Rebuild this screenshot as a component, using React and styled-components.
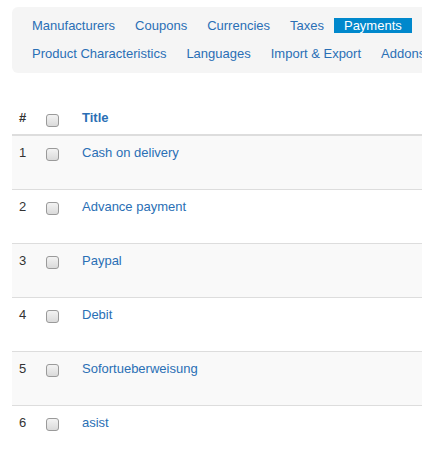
import React from "react";
import styled, { createGlobalStyle } from "styled-components";

const Global = createGlobalStyle`
  html, body { margin: 0; padding: 0; background: #fff; overflow: hidden; }
  body { font-family: "Liberation Sans", Arial, sans-serif; font-size: 13px; color: #333; }
`;

const Page = styled.div`
  width: 600px;
  padding: 7px 0 0 12px;
`;

const Nav = styled.ul`
  list-style: none;
  margin: 0;
  padding: 11px 10px 12px 10px;
  background: #f5f5f5;
  border-radius: 6px;
  display: flex;
  flex-wrap: wrap;
  row-gap: 13px;
  width: 440px;
  box-sizing: border-box;
`;

const NavItem = styled.li`
  a {
    display: block;
    padding: 0 10px;
    height: 15px;
    line-height: 15px;
    font-size: 13px;
    text-decoration: none;
    white-space: nowrap;
    color: ${(p) => (p.$active ? "#fff" : "#2a6fb5")};
    background: ${(p) => (p.$active ? "#0088cc" : "transparent")};
  }
`;

const Table = styled.table`
  margin-top: 26px;
  border-collapse: collapse;
  table-layout: fixed;
  width: 420px;
`;

const Th = styled.th`
  box-sizing: border-box;
  text-align: left;
  font-weight: bold;
  font-size: 13px;
  padding: 9px 7px 6px;
  height: 36px;
  line-height: 20px;
  vertical-align: middle;
  color: ${(p) => (p.$link ? "#2a6fb5" : "#333")};
  border-bottom: 2px solid #ddd;
  width: ${(p) => p.$w || "auto"};
`;

const Row = styled.tr`
  background: ${(p) => (p.$striped ? "#f9f9f9" : "#fff")};
  border-top: 1px solid #ddd;
  &:first-child { border-top: none; }
`;

const Td = styled.td`
  vertical-align: top;
  padding: 8px 7px 8px;
  height: 37px;
  line-height: 17px;
  font-size: 13px;
  color: ${(p) => (p.$link ? "#2a6fb5" : "#333")};
`;

const Check = styled.input.attrs({ type: "checkbox" })`
  appearance: none;
  -webkit-appearance: none;
  width: 13px;
  height: 13px;
  margin: 4px 0 0 0;
  box-sizing: border-box;
  border: 1px solid #9a9a9a;
  border-radius: 3px;
  background: linear-gradient(#f3f3f3, #dadada);
  vertical-align: top;
  display: block;
`;

const HeadCheck = styled(Check)`
  margin-top: 5px;
`;

const navItems = [
  "Manufacturers",
  "Coupons",
  "Currencies",
  "Taxes",
  "Payments",
  "Product Characteristics",
  "Languages",
  "Import & Export",
  "Addons",
];

const rows = [
  "Cash on delivery",
  "Advance payment",
  "Paypal",
  "Debit",
  "Sofortueberweisung",
  "asist",
];

export default function App() {
  return (
    <>
      <Global />
      <Page>
        <Nav>
          {navItems.map((n) => (
            <NavItem key={n} $active={n === "Payments"}>
              <a href="#">{n}</a>
            </NavItem>
          ))}
        </Nav>
        <Table>
          <thead>
            <tr>
              <Th $w="27px">#</Th>
              <Th $w="36px">
                <HeadCheck />
              </Th>
              <Th $link>Title</Th>
            </tr>
          </thead>
          <tbody>
            {rows.map((r, i) => (
              <Row key={r} $striped={i % 2 === 0}>
                <Td>{i + 1}</Td>
                <Td>
                  <Check />
                </Td>
                <Td $link>{r}</Td>
              </Row>
            ))}
          </tbody>
        </Table>
      </Page>
    </>
  );
}
